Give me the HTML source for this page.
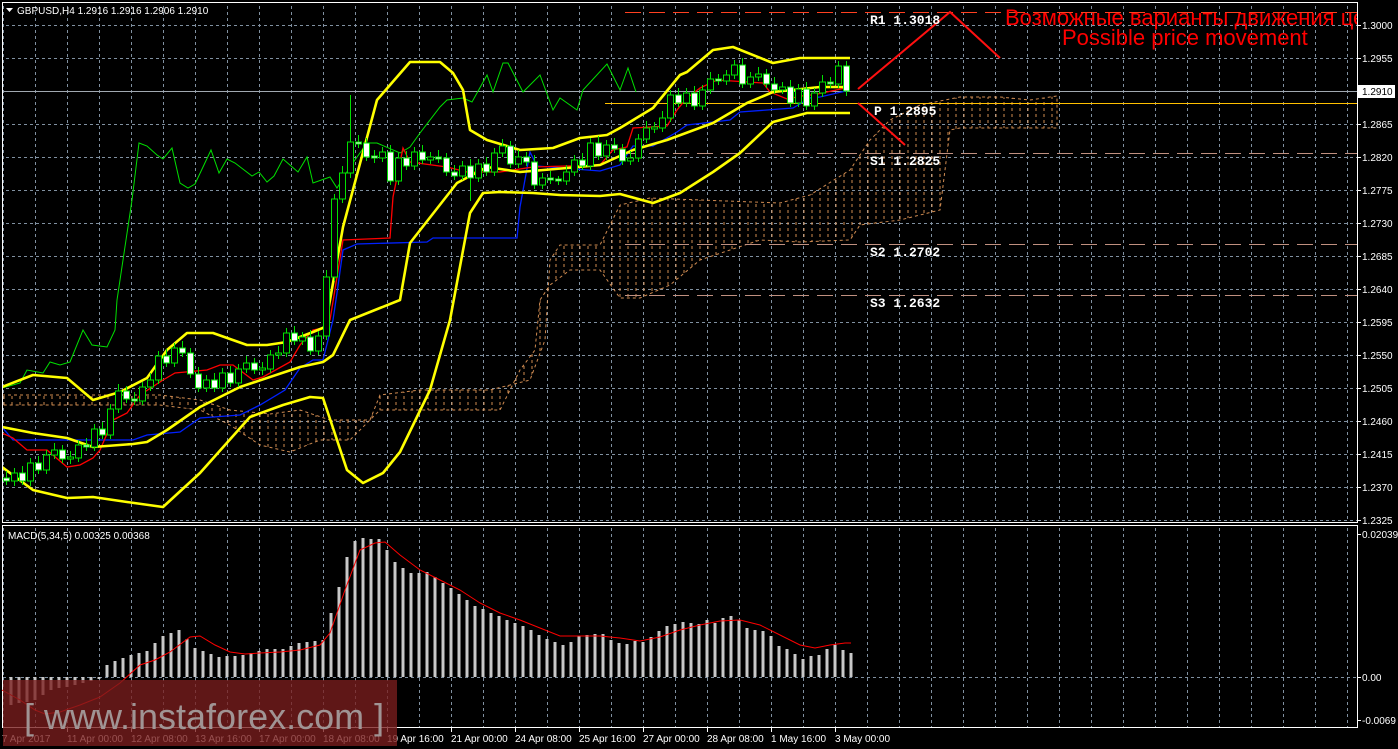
<!DOCTYPE html>
<html><head><meta charset="utf-8"><style>
html,body{margin:0;padding:0;background:#000;width:1398px;height:749px;overflow:hidden}
svg{display:block}
.ax{font-family:"Liberation Sans","DejaVu Sans",sans-serif;font-size:10px;fill:#fff}
.pv{font-family:"Liberation Mono","DejaVu Sans Mono",monospace;font-size:13px;fill:#fff;font-weight:bold}
.w{fill:#fff;stroke:#00e000;stroke-width:1}
.b{fill:#000;stroke:#00e000;stroke-width:1}
</style></head><body>
<svg width="1398" height="749" xmlns="http://www.w3.org/2000/svg">
<defs>
<pattern id="cp" width="8" height="6" patternUnits="userSpaceOnUse">
<line x1="4" y1="0" x2="4" y2="3" stroke="#f4a460" stroke-width="1"/>
</pattern>
<pattern id="gv" x="35" y="0" width="32" height="6" patternUnits="userSpaceOnUse">
<line x1="0.5" y1="0" x2="0.5" y2="3" stroke="#8090a0" stroke-width="1"/>
</pattern>
<pattern id="gh" x="0" y="25" width="6" height="33" patternUnits="userSpaceOnUse">
<line x1="0" y1="0.5" x2="3" y2="0.5" stroke="#8090a0" stroke-width="1"/>
</pattern>
<clipPath id="mc"><rect x="3" y="3" width="1354" height="519"/></clipPath>
</defs>
<rect width="1398" height="749" fill="#000"/>
<rect x="3" y="3" width="1354" height="519" fill="url(#gh)"/>
<rect x="3" y="3" width="1354" height="519" fill="url(#gv)"/>
<rect x="3" y="526" width="1354" height="201" fill="url(#gv)"/>
<line x1="3" y1="677.5" x2="1357" y2="677.5" stroke="#8090a0" stroke-dasharray="3,3"/>
<rect x="2.5" y="2.5" width="1355" height="520" fill="none" stroke="#fff"/>
<rect x="2.5" y="525.5" width="1355" height="202" fill="none" stroke="#fff"/>
<g clip-path="url(#mc)">
<path d="M2,395 L110,395 L160,395 L200,400 L230,410 L270,414 L300,410 L330,420 L370,420 L380,395 L420,390 L490,390 L530,380 L545,340 L550,260 L560,245 L600,245 L620,205 L650,198 L700,200 L780,203 L810,195 L850,170 L870,140 L890,120 L920,105 L960,97 L1000,97 L1030,100 L1057,96 L1057,128 L960,128 L950,130 L940,210 L900,220 L860,225 L850,240 L800,242 L760,240 L700,260 L670,285 L640,298 L620,298 L600,270 L570,270 L550,285 L540,300 L535,350 L520,370 L500,410 L460,410 L380,410 L350,440 L320,440 L290,452 L260,445 L230,425 L200,410 L160,405 L100,405 L2,405 Z" fill="url(#cp)" stroke="#f4a460" stroke-width="1" stroke-dasharray="3,3" opacity="0.85"/>
<line x1="625" y1="12.5" x2="1357" y2="12.5" stroke="#ff4020" stroke-dasharray="16,8"/>
<line x1="605" y1="103.5" x2="1357" y2="103.5" stroke="#ffc000"/>
<line x1="625" y1="153.5" x2="1357" y2="153.5" stroke="#c09080" stroke-dasharray="16,8"/>
<line x1="625" y1="244.5" x2="1357" y2="244.5" stroke="#c09080" stroke-dasharray="16,8"/>
<line x1="625" y1="295.5" x2="1357" y2="295.5" stroke="#c09080" stroke-dasharray="16,8"/>
<line x1="3" y1="91.5" x2="1357" y2="91.5" stroke="#a0a8b0"/>
<polyline fill="none" stroke="#00e000" stroke-width="1" points="2,388 20,383 27,370 43,373 50,362 60,365 70,362 83,330 92,345 107,347 115,330 117,300 132,200 139,143 147,146 157,155 163,159 172,148 180,183 188,188 195,184 211,150 219,173 227,159 235,163 252,176 259,172 267,182 274,176 283,159 298,172 307,157 313,183 330,177 337,188 350,167 367,143 377,143 400,153 410,147 420,133 440,107 447,100 463,98 472,102 487,75 493,92 503,63 508,63 523,92 540,75 553,110 560,98 577,110 583,90 607,64 620,90 628,68 636,92"/>
<polyline fill="none" stroke="#0020ff" stroke-width="1.3" points="2,427 13,440 40,440 133,440 147,435 180,432 200,418 240,415 260,405 285,390 300,368 313,360 323,360 333,320 337,293 343,250 357,244 427,242 433,238 517,238 520,207 530,152 537,166 600,171 620,165 633,146 653,146 677,132 687,125 730,120 740,112 767,110 793,108 810,98 820,97 850,90"/>
<polyline fill="none" stroke="#ff0000" stroke-width="1.3" points="2,433 13,438 27,450 47,450 67,467 80,465 93,458 100,450 113,420 127,413 140,395 163,380 175,373 207,370 220,365 233,365 253,380 263,377 290,362 300,345 313,330 323,328 330,320 343,240 390,238 393,197 403,148 410,162 447,167 467,172 500,172 533,167 600,165 613,150 627,147 633,128 667,126 677,110 687,98 700,88 717,80 763,83 770,92 787,99 807,95 813,95 850,87"/>
<g fill="none" stroke="#ffff00" stroke-width="2.6" stroke-linejoin="round">
<polyline points="2,387 33,375 67,378 93,400 120,392 147,378 167,350 187,333 213,333 247,345 267,345 287,342 313,332 325,327 330,300 343,227 377,100 410,62 440,62 453,73 463,90 470,130 487,140 520,150 553,148 580,138 607,135 620,128 653,108 680,75 687,72 713,50 733,47 773,63 800,58 850,58"/>
<polyline points="2,427 33,433 67,438 93,447 133,444 147,442 167,430 200,407 240,387 300,367 323,362 333,355 350,320 400,300 410,243 457,183 487,167 520,172 567,168 600,165 633,150 667,140 713,123 747,103 773,92 820,87 850,87"/>
<polyline points="2,467 33,490 67,498 93,497 127,502 163,507 200,473 250,417 283,405 310,397 323,398 347,470 363,483 383,473 400,452 430,390 450,320 470,213 483,193 500,192 533,193 560,195 600,196 620,194 653,203 680,193 713,172 740,153 773,122 807,113 850,113"/>
</g>
<path fill="none" stroke="#00e000" stroke-width="1" d="M6.5 471V485M14.5 468V486M22.5 466V485M30.5 458V486M38.5 456V474M46.5 450V474M54.5 443V459M62.5 445V463M70.5 451V464M78.5 440V462M86.5 438V451M94.5 424V451M102.5 422V439M110.5 404V439M118.5 384V413M126.5 386V403M134.5 392V405M142.5 382V405M150.5 373V391M158.5 351V384M166.5 349V367M174.5 343V367M182.5 341V357M190.5 348V378M198.5 367V392M206.5 375V392M214.5 373V392M222.5 368V392M230.5 366V387M238.5 364V387M246.5 356V373M254.5 358V374M262.5 362V375M270.5 350V373M278.5 346V359M286.5 328V357M294.5 326V345M302.5 332V345M310.5 330V355M318.5 331V355M326.5 270V340M334.5 194V281M342.5 166V203M350.5 95V178M358.5 135V148M366.5 138V161M374.5 150V163M382.5 147V162M390.5 145V185M398.5 153V185M406.5 151V170M414.5 147V170M422.5 145V164M430.5 152V164M438.5 150V163M446.5 153V176M454.5 165V180M462.5 161V180M470.5 159V201M478.5 159V182M486.5 157V176M494.5 148V176M502.5 139V157M510.5 141V168M518.5 150V168M526.5 152V166M534.5 155V189M542.5 173V189M550.5 171V184M558.5 176V185M566.5 165V185M574.5 155V176M582.5 153V170M590.5 138V170M598.5 136V160M606.5 140V160M614.5 138V153M622.5 144V165M630.5 151V165M638.5 134V162M646.5 121V143M654.5 122V133M662.5 111V132M670.5 90V122M678.5 88V107M686.5 88V107M694.5 86V110M702.5 85V110M710.5 72V94M718.5 74V85M726.5 70V85M734.5 60V79M742.5 58V88M750.5 72V88M758.5 67V81M766.5 69V88M774.5 77V94M782.5 82V94M790.5 80V107M798.5 84V107M806.5 82V110M814.5 88V110M822.5 75V97M830.5 77V88M838.5 61V88M846.5 61V96"/>
<rect class="w" x="3.5" y="478" width="6" height="3"/>
<rect class="b" x="11.5" y="473" width="6" height="8"/>
<rect class="w" x="19.5" y="473" width="6" height="8"/>
<rect class="b" x="27.5" y="463" width="6" height="18"/>
<rect class="w" x="35.5" y="463" width="6" height="7"/>
<rect class="b" x="43.5" y="455" width="6" height="15"/>
<rect class="b" x="51.5" y="450" width="6" height="5"/>
<rect class="w" x="59.5" y="450" width="6" height="9"/>
<rect class="b" x="67.5" y="457" width="6" height="2"/>
<rect class="b" x="75.5" y="445" width="6" height="13"/>
<rect class="w" x="83.5" y="445" width="6" height="2"/>
<rect class="b" x="91.5" y="429" width="6" height="18"/>
<rect class="w" x="99.5" y="429" width="6" height="6"/>
<rect class="b" x="107.5" y="409" width="6" height="26"/>
<rect class="b" x="115.5" y="391" width="6" height="18"/>
<rect class="w" x="123.5" y="391" width="6" height="8"/>
<rect class="w" x="131.5" y="399" width="6" height="2"/>
<rect class="b" x="139.5" y="387" width="6" height="14"/>
<rect class="b" x="147.5" y="380" width="6" height="7"/>
<rect class="b" x="155.5" y="356" width="6" height="24"/>
<rect class="w" x="163.5" y="356" width="6" height="7"/>
<rect class="b" x="171.5" y="348" width="6" height="15"/>
<rect class="w" x="179.5" y="348" width="6" height="5"/>
<rect class="w" x="187.5" y="353" width="6" height="21"/>
<rect class="w" x="195.5" y="374" width="6" height="14"/>
<rect class="b" x="203.5" y="380" width="6" height="8"/>
<rect class="w" x="211.5" y="380" width="6" height="8"/>
<rect class="b" x="219.5" y="373" width="6" height="15"/>
<rect class="w" x="227.5" y="373" width="6" height="10"/>
<rect class="b" x="235.5" y="369" width="6" height="14"/>
<rect class="b" x="243.5" y="363" width="6" height="6"/>
<rect class="w" x="251.5" y="363" width="6" height="7"/>
<rect class="b" x="259.5" y="368" width="6" height="2"/>
<rect class="b" x="267.5" y="355" width="6" height="14"/>
<rect class="b" x="275.5" y="353" width="6" height="2"/>
<rect class="b" x="283.5" y="333" width="6" height="20"/>
<rect class="w" x="291.5" y="333" width="6" height="8"/>
<rect class="b" x="299.5" y="337" width="6" height="4"/>
<rect class="w" x="307.5" y="337" width="6" height="14"/>
<rect class="b" x="315.5" y="336" width="6" height="15"/>
<rect class="b" x="323.5" y="277" width="6" height="59"/>
<rect class="b" x="331.5" y="199" width="6" height="78"/>
<rect class="b" x="339.5" y="173" width="6" height="26"/>
<rect class="b" x="347.5" y="142" width="6" height="31"/>
<rect class="w" x="355.5" y="142" width="6" height="2"/>
<rect class="w" x="363.5" y="143" width="6" height="14"/>
<rect class="w" x="371.5" y="156" width="6" height="2"/>
<rect class="b" x="379.5" y="152" width="6" height="6"/>
<rect class="w" x="387.5" y="152" width="6" height="29"/>
<rect class="b" x="395.5" y="158" width="6" height="23"/>
<rect class="w" x="403.5" y="158" width="6" height="8"/>
<rect class="b" x="411.5" y="152" width="6" height="14"/>
<rect class="w" x="419.5" y="152" width="6" height="8"/>
<rect class="b" x="427.5" y="157" width="6" height="3"/>
<rect class="w" x="435.5" y="157" width="6" height="2"/>
<rect class="w" x="443.5" y="158" width="6" height="14"/>
<rect class="w" x="451.5" y="172" width="6" height="4"/>
<rect class="b" x="459.5" y="166" width="6" height="10"/>
<rect class="w" x="467.5" y="166" width="6" height="12"/>
<rect class="b" x="475.5" y="164" width="6" height="14"/>
<rect class="w" x="483.5" y="164" width="6" height="8"/>
<rect class="b" x="491.5" y="153" width="6" height="19"/>
<rect class="b" x="499.5" y="146" width="6" height="7"/>
<rect class="w" x="507.5" y="146" width="6" height="18"/>
<rect class="b" x="515.5" y="157" width="6" height="7"/>
<rect class="w" x="523.5" y="157" width="6" height="5"/>
<rect class="w" x="531.5" y="162" width="6" height="23"/>
<rect class="b" x="539.5" y="178" width="6" height="7"/>
<rect class="w" x="547.5" y="178" width="6" height="2"/>
<rect class="w" x="555.5" y="179" width="6" height="2"/>
<rect class="b" x="563.5" y="172" width="6" height="9"/>
<rect class="b" x="571.5" y="160" width="6" height="12"/>
<rect class="w" x="579.5" y="160" width="6" height="6"/>
<rect class="b" x="587.5" y="143" width="6" height="23"/>
<rect class="w" x="595.5" y="143" width="6" height="13"/>
<rect class="b" x="603.5" y="145" width="6" height="11"/>
<rect class="w" x="611.5" y="145" width="6" height="4"/>
<rect class="w" x="619.5" y="149" width="6" height="12"/>
<rect class="b" x="627.5" y="158" width="6" height="3"/>
<rect class="b" x="635.5" y="139" width="6" height="19"/>
<rect class="b" x="643.5" y="128" width="6" height="11"/>
<rect class="b" x="651.5" y="127" width="6" height="2"/>
<rect class="b" x="659.5" y="118" width="6" height="10"/>
<rect class="b" x="667.5" y="95" width="6" height="23"/>
<rect class="w" x="675.5" y="95" width="6" height="8"/>
<rect class="b" x="683.5" y="93" width="6" height="10"/>
<rect class="w" x="691.5" y="93" width="6" height="13"/>
<rect class="b" x="699.5" y="90" width="6" height="16"/>
<rect class="b" x="707.5" y="79" width="6" height="11"/>
<rect class="w" x="715.5" y="79" width="6" height="2"/>
<rect class="b" x="723.5" y="75" width="6" height="6"/>
<rect class="b" x="731.5" y="65" width="6" height="10"/>
<rect class="w" x="739.5" y="65" width="6" height="19"/>
<rect class="b" x="747.5" y="77" width="6" height="7"/>
<rect class="b" x="755.5" y="74" width="6" height="3"/>
<rect class="w" x="763.5" y="74" width="6" height="10"/>
<rect class="w" x="771.5" y="84" width="6" height="6"/>
<rect class="b" x="779.5" y="87" width="6" height="3"/>
<rect class="w" x="787.5" y="87" width="6" height="16"/>
<rect class="b" x="795.5" y="89" width="6" height="14"/>
<rect class="w" x="803.5" y="89" width="6" height="17"/>
<rect class="b" x="811.5" y="93" width="6" height="13"/>
<rect class="b" x="819.5" y="82" width="6" height="11"/>
<rect class="w" x="827.5" y="82" width="6" height="2"/>
<rect class="b" x="835.5" y="66" width="6" height="18"/>
<rect class="w" x="843.5" y="66" width="6" height="25"/>
<polyline fill="none" stroke="#ff1010" stroke-width="2" points="858,89 950,12 1000,58"/>
<line x1="858" y1="103" x2="905" y2="145" stroke="#ff1010" stroke-width="2"/>
<text class="pv" x="870" y="24">R1 1.3018</text>
<text class="pv" x="874" y="115">P 1.2895</text>
<text class="pv" x="870" y="165">S1 1.2825</text>
<text class="pv" x="870" y="256">S2 1.2702</text>
<text class="pv" x="870" y="307">S3 1.2632</text>
<text x="1005" y="25" fill="#ff0000" font-family="Liberation Sans,sans-serif" font-size="22">Возможные варианты движения цен</text>
<text x="1062" y="45" fill="#ff0000" font-family="Liberation Sans,sans-serif" font-size="22">Possible price movement</text>
</g>
<text class="ax" x="17" y="14">GBPUSD,H4  1.2916 1.2916 1.2906 1.2910</text>
<path d="M6,8 L13,8 L9.5,12 Z" fill="#fff"/>
<path stroke="#fff" d="M1357 25.5h4M1357 58.5h4M1357 124.5h4M1357 157.5h4M1357 190.5h4M1357 223.5h4M1357 256.5h4M1357 289.5h4M1357 322.5h4M1357 355.5h4M1357 388.5h4M1357 421.5h4M1357 454.5h4M1357 487.5h4M1357 520.5h4M1357 534.5h4M1357 677.5h4M1357 720.5h4"/>
<text class="ax" x="1362" y="29">1.3000</text>
<text class="ax" x="1362" y="62">1.2955</text>
<text class="ax" x="1362" y="128">1.2865</text>
<text class="ax" x="1362" y="161">1.2820</text>
<text class="ax" x="1362" y="194">1.2775</text>
<text class="ax" x="1362" y="227">1.2730</text>
<text class="ax" x="1362" y="260">1.2685</text>
<text class="ax" x="1362" y="293">1.2640</text>
<text class="ax" x="1362" y="326">1.2595</text>
<text class="ax" x="1362" y="359">1.2550</text>
<text class="ax" x="1362" y="392">1.2505</text>
<text class="ax" x="1362" y="425">1.2460</text>
<text class="ax" x="1362" y="458">1.2415</text>
<text class="ax" x="1362" y="491">1.2370</text>
<text class="ax" x="1362" y="524">1.2325</text>
<rect x="1357" y="85" width="38" height="13" fill="#fff"/>
<text x="1362" y="95" font-family="Liberation Sans,sans-serif" font-size="10" fill="#000">1.2910</text>
<path fill="none" stroke="#c8c8c8" stroke-width="3" d="M11 677V705M19 677V703M27 677V702M35 677V700M43 677V695M51 677V690M59 677V688M67 677V687M75 677V685M83 677V683M91 677V681M99 677V679M107 677V665M115 677V661M123 677V658M131 677V655M139 677V653M147 677V651M155 677V643M163 677V636M171 677V633M179 677V630M187 677V639M195 677V648M203 677V651M211 677V654M219 677V657M227 677V656M235 677V656M243 677V655M251 677V653M259 677V651M267 677V649M275 677V649M283 677V649M291 677V646M299 677V643M307 677V642M315 677V641M323 677V640M331 677V613M339 677V587M347 677V557M355 677V541M363 677V538M371 677V539M379 677V539M387 677V550M395 677V562M403 677V568M411 677V573M419 677V573M427 677V572M435 677V577M443 677V583M451 677V588M459 677V594M467 677V600M475 677V606M483 677V609M491 677V613M499 677V616M507 677V620M515 677V623M523 677V626M531 677V630M539 677V635M547 677V639M555 677V642M563 677V645M571 677V642M579 677V636M587 677V635M595 677V634M603 677V634M611 677V640M619 677V643M627 677V644M635 677V641M643 677V642M651 677V637M659 677V631M667 677V626M675 677V624M683 677V622M691 677V623M699 677V624M707 677V620M715 677V623M723 677V618M731 677V616M739 677V620M747 677V628M755 677V630M763 677V631M771 677V636M779 677V646M787 677V649M795 677V654M803 677V659M811 677V656M819 677V655M827 677V649M835 677V645M843 677V650M851 677V653"/>
<polyline fill="none" stroke="#ff0000" stroke-width="1" points="2,690 20,700 35,710 45,714 60,712 80,705 100,697 120,683 140,665 155,660 170,652 190,637 200,636 215,645 230,652 245,654 260,653 280,652 300,650 320,645 330,633 345,590 360,550 375,543 385,542 400,555 420,570 440,580 460,590 480,603 500,613 520,620 540,628 560,636 580,636 600,636 620,638 640,641 660,637 680,630 700,625 720,621 740,620 760,625 780,635 800,645 815,648 830,645 845,643 851,643"/>
<text class="ax" x="8" y="539">MACD(5,34,5) 0.00325 0.00368</text>
<text class="ax" x="1362" y="538">0.02039</text>
<text class="ax" x="1362" y="681">0.00</text>
<text class="ax" x="1362" y="724">-0.0069</text>
<path stroke="#fff" d="M67.5 728v4M131.5 728v4M195.5 728v4M259.5 728v4M323.5 728v4M387.5 728v4M451.5 728v4M515.5 728v4M579.5 728v4M643.5 728v4M707.5 728v4M771.5 728v4M835.5 728v4"/>
<text class="ax" x="2" y="742">7 Apr 2017</text>
<text class="ax" x="67" y="742">11 Apr 00:00</text>
<text class="ax" x="131" y="742">12 Apr 08:00</text>
<text class="ax" x="195" y="742">13 Apr 16:00</text>
<text class="ax" x="259" y="742">17 Apr 00:00</text>
<text class="ax" x="323" y="742">18 Apr 08:00</text>
<text class="ax" x="387" y="742">19 Apr 16:00</text>
<text class="ax" x="451" y="742">21 Apr 00:00</text>
<text class="ax" x="515" y="742">24 Apr 08:00</text>
<text class="ax" x="579" y="742">25 Apr 16:00</text>
<text class="ax" x="643" y="742">27 Apr 00:00</text>
<text class="ax" x="707" y="742">28 Apr 08:00</text>
<text class="ax" x="771" y="742">1 May 16:00</text>
<text class="ax" x="835" y="742">3 May 00:00</text>
<rect x="3" y="680" width="394" height="66" fill="#7a1e1e" opacity="0.78"/>
<text x="24" y="729" fill="#a09494" font-family="Liberation Sans,sans-serif" font-size="36">[ www.instaforex.com ]</text>
</svg>
</body></html>
